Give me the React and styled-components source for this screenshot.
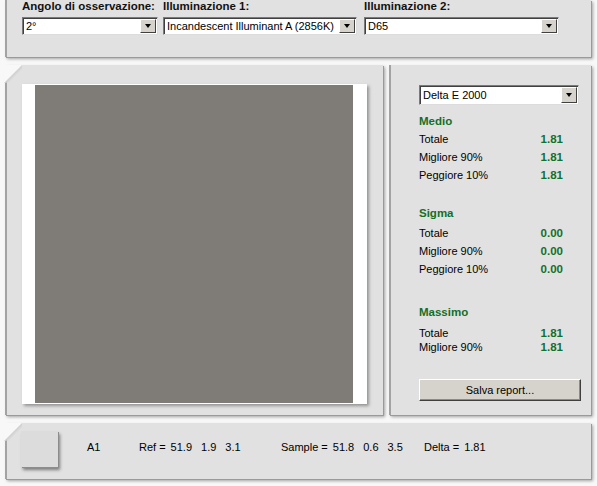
import styled, { createGlobalStyle } from 'styled-components';

const GlobalStyle = createGlobalStyle`
  html, body {
    margin: 0;
    padding: 0;
    background: #f8f8f8;
  }
  body {
    font-family: "Liberation Sans", Arial, sans-serif;
    font-size: 11px;
    color: #000;
  }
`;

const Screen = styled.div`
  width: 597px;
  height: 486px;
  padding-left: 5px;
  box-sizing: border-box;
  overflow: hidden;
`;

const Panel = styled.div`
  position: relative;
  box-sizing: border-box;
  background: #e1e1e1;
  border-left: 2px solid #a3a3a3;
  box-shadow: 1px 1px 0 #9a9a9a, 2px 2px 3px rgba(0, 0, 0, 0.35);

  ${(p) =>
    p.$chamfer &&
    `
    &::before {
      content: '';
      position: absolute;
      top: 0;
      left: -3px;
      width: 18px;
      height: 18px;
      background: linear-gradient(135deg, #f8f8f8 0 48%, #d0d0d0 52%, transparent 64%);
    }
  `}
`;

const TopPanel = styled(Panel)`
  width: 586px;
  height: 57px;
  padding-left: 15px;
  display: flex;
`;

const Field = styled.div`
  display: flex;
  flex-direction: column;
  width: ${(p) => p.$width}px;
  margin-left: ${(p) => p.$offset || 0}px;
`;

const Label = styled.div`
  font-weight: bold;
  font-size: 11.5px;
  line-height: 13px;
  height: 13px;
  margin-bottom: 4px;
  color: #111;
  white-space: nowrap;
`;

const SelectBox = styled.div`
  box-sizing: border-box;
  height: ${(p) => p.$height || 18}px;
  width: ${(p) => (p.$width ? `${p.$width}px` : '100%')};
  background: #fff;
  border-top: 1px solid #7a7a7a;
  border-left: 1px solid #7a7a7a;
  border-right: 1px solid #dcdcdc;
  border-bottom: 1px solid #dcdcdc;
  box-shadow: inset 1px 1px 0 #404040;
  display: flex;
  align-items: center;
  padding: 0 1px 0 3px;
`;

const SelectText = styled.span`
  flex: 1;
  white-space: nowrap;
  overflow: hidden;
  line-height: 14px;
`;

const ArrowButton = styled.span`
  box-sizing: border-box;
  width: 16px;
  height: ${(p) => p.$size || 14}px;
  background: #d6d3cd;
  border-top: 1px solid #fff;
  border-left: 1px solid #fff;
  border-right: 1px solid #404040;
  border-bottom: 1px solid #404040;
  display: flex;
  align-items: center;
  justify-content: center;

  &::after {
    content: '';
    border-left: 3.5px solid transparent;
    border-right: 3.5px solid transparent;
    border-top: 4px solid #000;
  }
`;

const MainRow = styled.div`
  display: flex;
  gap: 6px;
  margin-top: 8px;
  height: 350px;
`;

const PreviewPanel = styled(Panel)`
  width: 378px;
  padding: 19px 0 0 15px;
`;

const PreviewCard = styled.div`
  width: 345px;
  height: 320px;
  box-sizing: border-box;
  background: #fff;
  padding: 1px 14px 1px 13px;
  box-shadow: 2px 2px 3px rgba(0, 0, 0, 0.35);
`;

const ColorSwatch = styled.div`
  width: 100%;
  height: 100%;
  background: ${(p) => p.$color};
`;

const StatsPanel = styled(Panel)`
  width: 202px;
  padding: 20px 12px 0 28px;
  display: flex;
  flex-direction: column;
`;

const SectionTitle = styled.div`
  color: #137026;
  font-weight: bold;
  font-size: 11.5px;
  line-height: 14px;
  margin-top: ${(p) => p.$top}px;
  margin-bottom: ${(p) => p.$bottom}px;
`;

const StatRow = styled.div`
  display: flex;
  justify-content: space-between;
  width: 144px;
  height: ${(p) => p.$height}px;
  line-height: ${(p) => p.$height}px;
`;

const StatValue = styled.span`
  color: #137026;
  font-weight: bold;
  font-size: 11.5px;
`;

const ReportButton = styled.button`
  margin-top: 25px;
  width: 162px;
  height: 22px;
  box-sizing: border-box;
  background: #d6d3cd;
  border-top: 1px solid #fff;
  border-left: 1px solid #fff;
  border-right: 1px solid #404040;
  border-bottom: 1px solid #404040;
  box-shadow: inset -1px -1px 0 #8a8a8a;
  font-family: "Liberation Sans", Arial, sans-serif;
  font-size: 11px;
  color: #000;
  padding: 0;
`;

const BottomPanel = styled(Panel)`
  width: 586px;
  height: 56px;
  margin-top: 8px;
  padding: 8px 0 0 14px;
  display: flex;
  align-items: flex-start;
`;

const SampleChip = styled.div`
  width: 37px;
  height: 36px;
  background: #dcdcdc;
  box-shadow: 1px 1px 0 #8c8c8c, 2px 3px 3px rgba(0, 0, 0, 0.45);
  margin-right: 29px;
`;

const InfoCell = styled.div`
  width: ${(p) => (p.$width ? `${p.$width}px` : 'auto')};
  display: flex;
  line-height: 14px;
  margin-top: 9px;
  white-space: nowrap;
`;

const InfoLabel = styled.span`
  margin-right: 5px;
`;

const InfoNum = styled.span`
  margin-right: 9px;
`;

const stats = [
  {
    title: 'Medio',
    top: 9,
    bottom: 2,
    height: 18,
    rows: [
      ['Totale', '1.81'],
      ['Migliore 90%', '1.81'],
      ['Peggiore 10%', '1.81'],
    ],
  },
  {
    title: 'Sigma',
    top: 22,
    bottom: 4,
    height: 18,
    rows: [
      ['Totale', '0.00'],
      ['Migliore 90%', '0.00'],
      ['Peggiore 10%', '0.00'],
    ],
  },
  {
    title: 'Massimo',
    top: 27,
    bottom: 7,
    height: 14,
    rows: [
      ['Totale', '1.81'],
      ['Migliore 90%', '1.81'],
    ],
  },
];

function Select({ value, width, height, arrow }) {
  return (
    <SelectBox $width={width} $height={height}>
      <SelectText>{value}</SelectText>
      <ArrowButton $size={arrow} />
    </SelectBox>
  );
}

export default function App() {
  return (
    <Screen>
      <GlobalStyle />
      <TopPanel>
        <Field $width={136}>
          <Label>Angolo di osservazione:</Label>
          <Select value="2°" />
        </Field>
        <Field $width={194} $offset={5}>
          <Label>Illuminazione 1:</Label>
          <Select value="Incandescent Illuminant A (2856K)" />
        </Field>
        <Field $width={195} $offset={7}>
          <Label>Illuminazione 2:</Label>
          <Select value="D65" />
        </Field>
      </TopPanel>

      <MainRow>
        <PreviewPanel $chamfer>
          <PreviewCard>
            <ColorSwatch $color="#7f7b77" />
          </PreviewCard>
        </PreviewPanel>

        <StatsPanel>
          <Select value="Delta E 2000" width={160} height={20} arrow={16} />
          {stats.map((s) => (
            <div key={s.title}>
              <SectionTitle $top={s.top} $bottom={s.bottom}>
                {s.title}
              </SectionTitle>
              {s.rows.map(([label, value]) => (
                <StatRow key={label} $height={s.height}>
                  <span>{label}</span>
                  <StatValue>{value}</StatValue>
                </StatRow>
              ))}
            </div>
          ))}
          <ReportButton>Salva report...</ReportButton>
        </StatsPanel>
      </MainRow>

      <BottomPanel $chamfer>
        <SampleChip />
        <InfoCell $width={52}>A1</InfoCell>
        <InfoCell $width={142}>
          <InfoLabel>Ref =</InfoLabel>
          <InfoNum>51.9</InfoNum>
          <InfoNum>1.9</InfoNum>
          <InfoNum>3.1</InfoNum>
        </InfoCell>
        <InfoCell $width={143}>
          <InfoLabel>Sample =</InfoLabel>
          <InfoNum>51.8</InfoNum>
          <InfoNum>0.6</InfoNum>
          <InfoNum>3.5</InfoNum>
        </InfoCell>
        <InfoCell>
          <InfoLabel>Delta =</InfoLabel>
          <span>1.81</span>
        </InfoCell>
      </BottomPanel>
    </Screen>
  );
}
